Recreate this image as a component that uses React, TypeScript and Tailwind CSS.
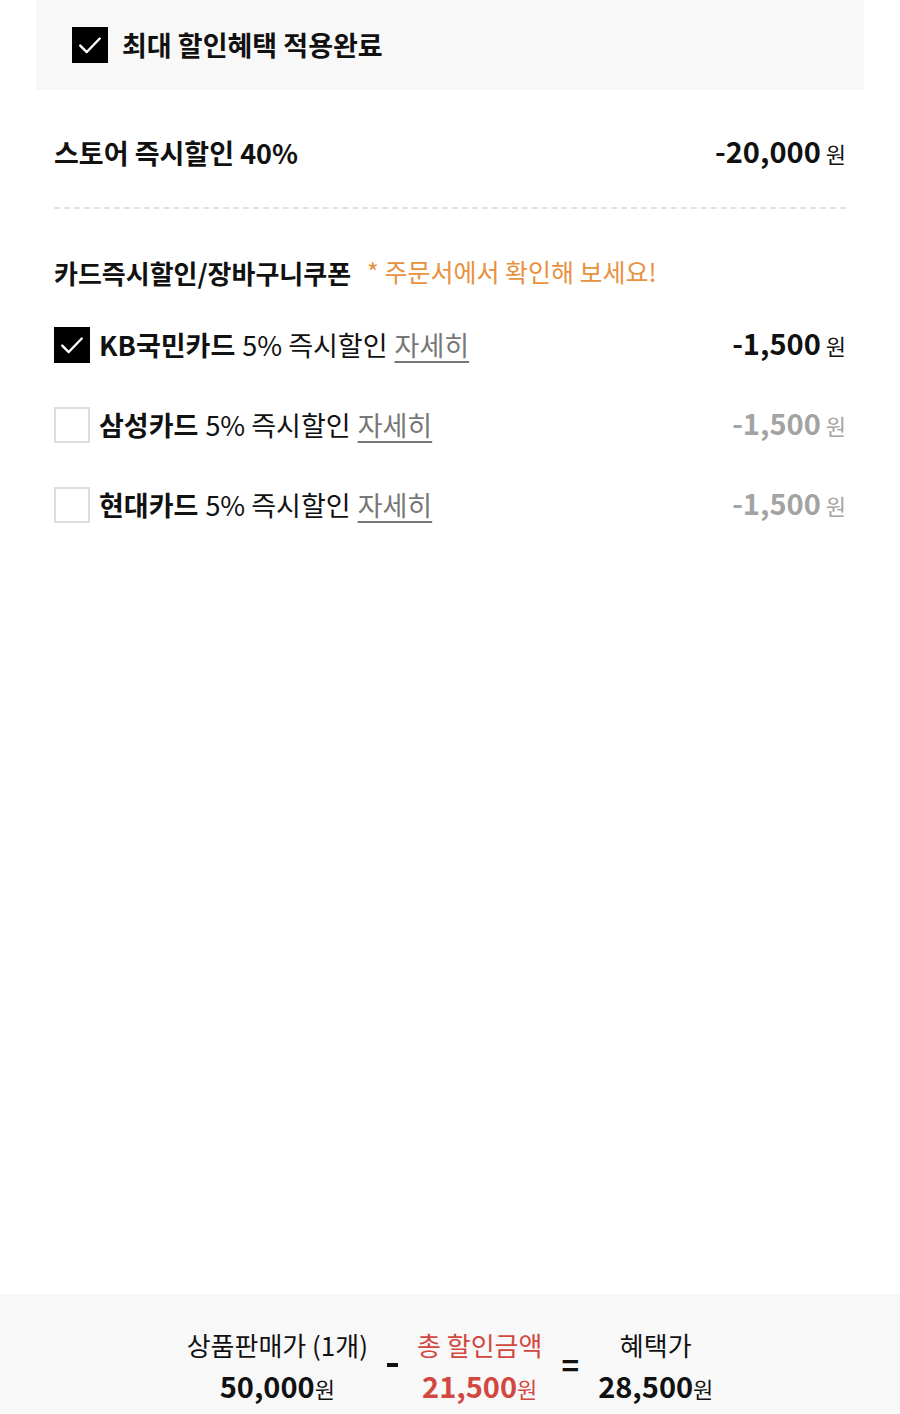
import React from 'react';

const font = { fontFamily: '"Noto Sans CJK KR", "Noto Sans", sans-serif' };

function CheckBox({ checked }: { checked: boolean }) {
  if (!checked) {
    return <span className="w-[36px] h-[36px] shrink-0 border-2 border-[#dddddd] bg-white" />;
  }
  return (
    <span className="w-[36px] h-[36px] shrink-0 bg-black flex items-center justify-center">
      <svg width="26" height="26" viewBox="0 0 24 24" fill="none">
        <polyline points="3,12.5 9,18.5 21,6" stroke="white" strokeWidth="2.2" strokeLinecap="round" strokeLinejoin="round" />
      </svg>
    </span>
  );
}

const cards = [
  { name: 'KB국민카드', checked: true },
  { name: '삼성카드', checked: false },
  { name: '현대카드', checked: false },
];

function Amount({ value, muted }: { value: string; muted?: boolean }) {
  return (
    <span className={`flex items-baseline gap-[5px] -mt-[4px] ${muted ? 'text-[#a3a3a3]' : 'text-[#111111]'}`}>
      <span className="text-[29px] font-bold">{value}</span>
      <span className="text-[22px]">원</span>
    </span>
  );
}

function Total({ label, value, red }: { label: string; value: string; red?: boolean }) {
  return (
    <div className={`flex flex-col items-center ${red ? 'text-[#d2473f]' : 'text-[#111111]'}`}>
      <span className="text-[26px] leading-[38px]">{label}</span>
      <span className="leading-[42px] flex items-baseline">
        <span className="text-[29px] font-bold">{value}</span>
        <span className="text-[22px]">원</span>
      </span>
    </div>
  );
}

export default function App() {
  return (
    <div className="h-[1414px] flex flex-col bg-white text-[#111111]" style={font}>
      {/* 최대 할인 적용 */}
      <div className="mx-[36px] h-[90px] bg-[#f8f8f8] flex items-center gap-[14px] pl-[36px]">
        <CheckBox checked />
        <span className="text-[27px] font-bold">최대 할인혜택 적용완료</span>
      </div>

      <div className="px-[54px]">
        {/* 스토어 즉시할인 */}
        <div className="mt-[30px] h-[66px] flex items-center justify-between">
          <span className="text-[27px] font-bold">스토어 즉시할인 40%</span>
          <Amount value="-20,000" />
        </div>

        <div className="mt-[21px] border-t-2 border-dashed border-[#e2e2e2]" />

        {/* 카드즉시할인 */}
        <div className="mt-[43px] h-[40px] flex items-center gap-[16px]">
          <span className="text-[26px] font-bold">카드즉시할인/장바구니쿠폰</span>
          <span className="text-[25px] text-[#e8913f]">* 주문서에서 확인해 보세요!</span>
        </div>

        <div className="mt-[23px] flex flex-col gap-[20px]">
          {cards.map((c) => (
            <div key={c.name} className="h-[60px] flex items-center justify-between">
              <div className="flex items-center gap-[9px]">
                <CheckBox checked={c.checked} />
                <span className="text-[27px] flex items-baseline gap-[7px]">
                  <span className="font-bold">{c.name}</span>
                  <span>5% 즉시할인</span>
                  <span className="text-[#777777] underline underline-offset-[5px] decoration-[1.5px]">자세히</span>
                </span>
              </div>
              <Amount value="-1,500" muted={!c.checked} />
            </div>
          ))}
        </div>
      </div>

      <div className="flex-1" />

      {/* 하단 합계 */}
      <div className="h-[120px] bg-[#f8f8f8] pt-[32px] flex justify-center items-start gap-[19px]">
        <Total label="상품판매가 (1개)" value="50,000" />
        <span className="mt-[37px] w-[11px] h-[4px] bg-[#111111]" />
        <Total label="총 할인금액" value="21,500" red />
        <span className="mt-[20px] text-[30px] font-bold leading-[36px]">=</span>
        <Total label="혜택가" value="28,500" />
      </div>
    </div>
  );
}
